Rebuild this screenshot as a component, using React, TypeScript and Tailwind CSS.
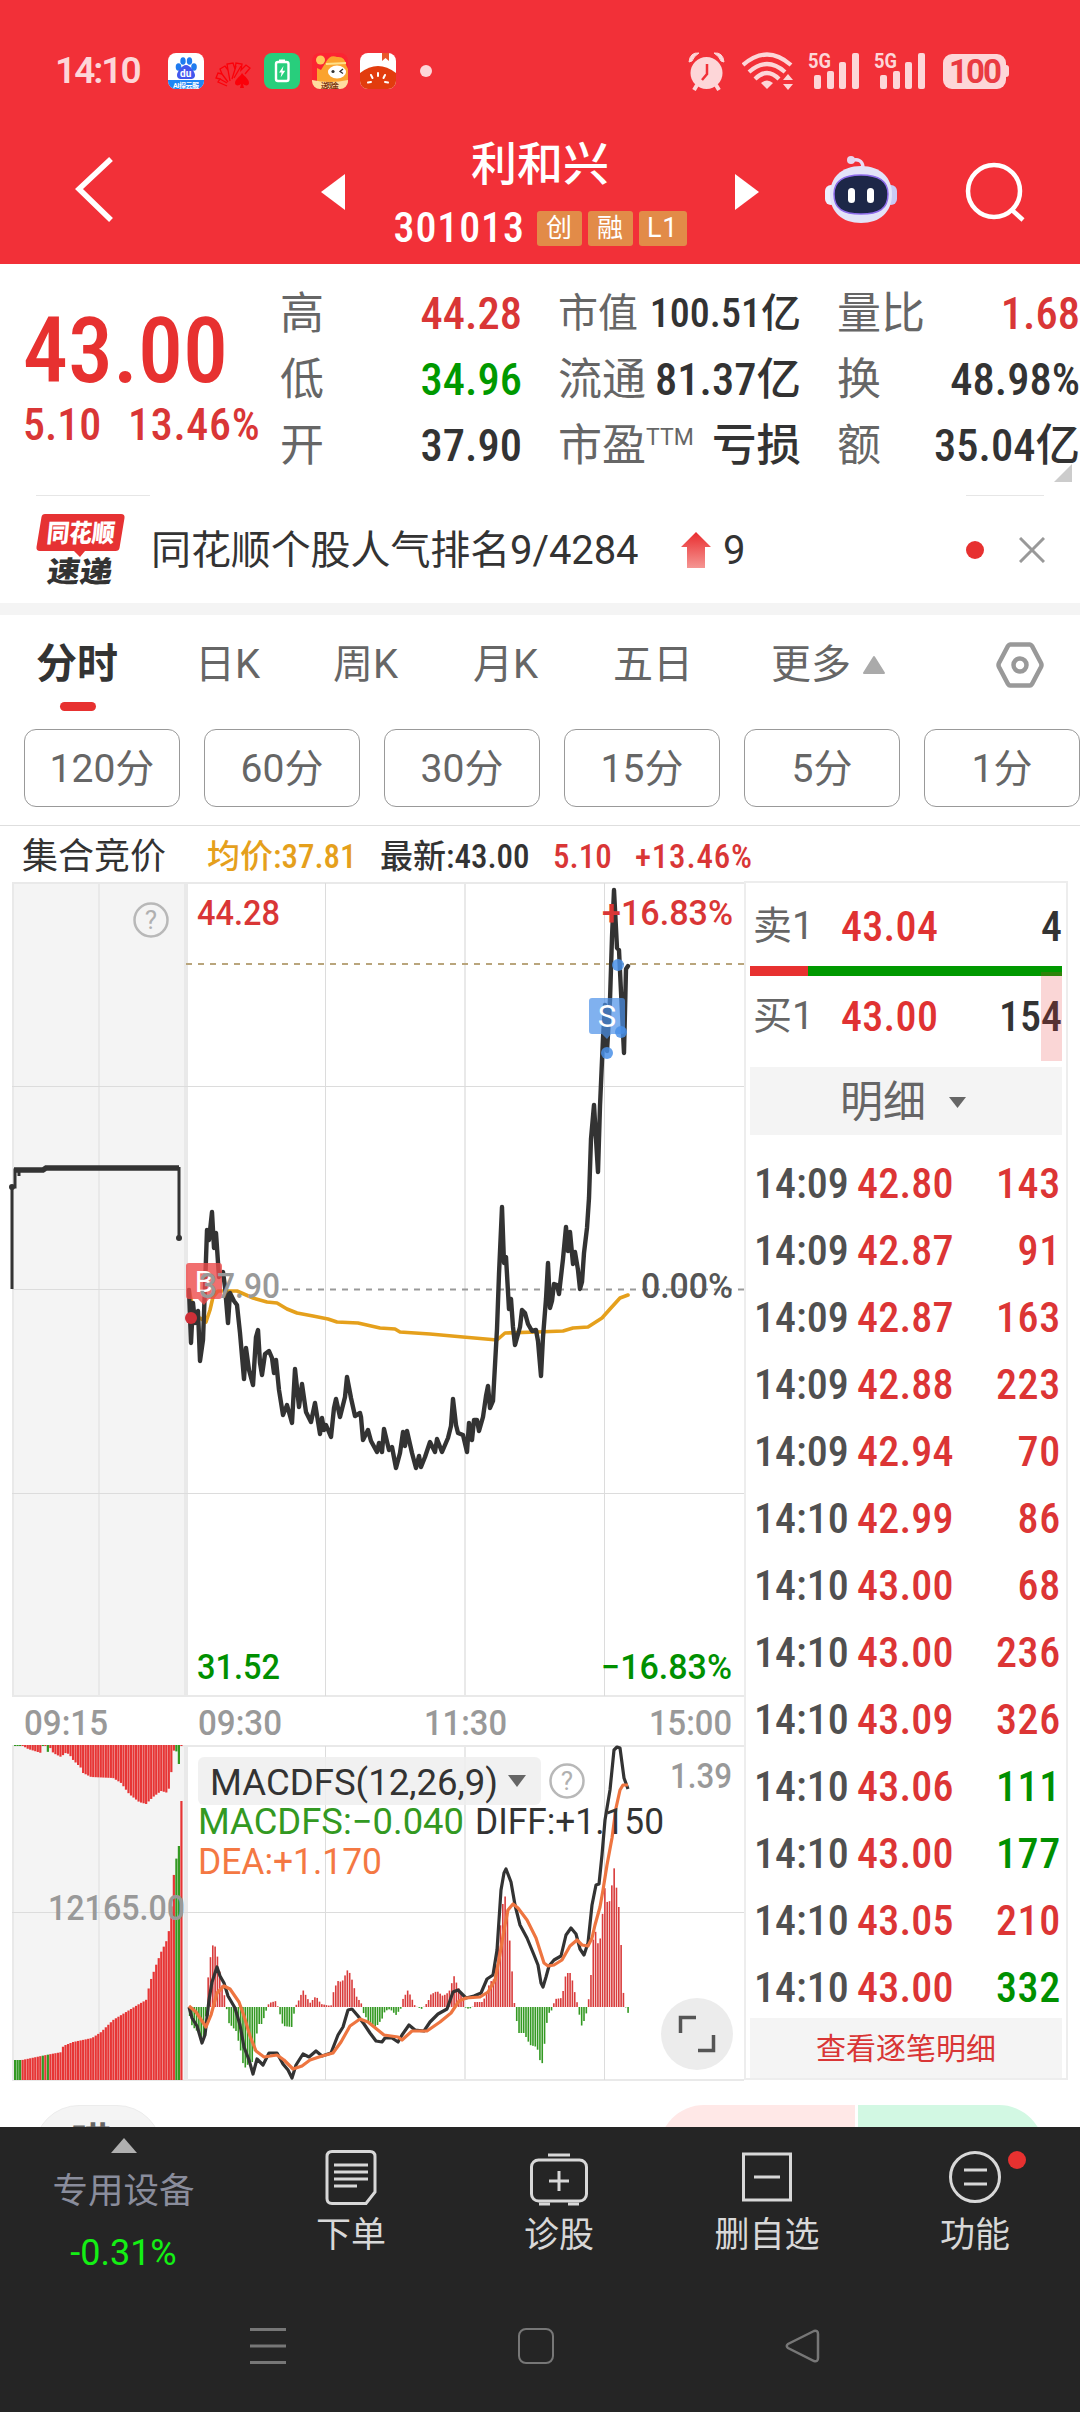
import clsx from "clsx";
import type { ReactNode } from "react";

type Point = [number, number];

const price =
  "189,1290 191,1343 193,1303 195,1323 198,1311 200,1361 203,1340 205,1287 207,1230 209,1240 212,1212 214,1248 216,1233 219,1277 223,1272 225,1287 228,1323 230,1293 234,1301 237,1305 240,1333 244,1379 246,1348 249,1370 253,1385 256,1337 258,1330 260,1363 262,1375 265,1354 269,1351 272,1358 274,1373 276,1360 279,1390 283,1415 287,1405 292,1423 295,1369 299,1407 302,1384 306,1412 311,1422 315,1403 320,1434 322,1418 324,1430 326,1425 331,1437 334,1408 336,1399 340,1417 345,1397 347,1377 351,1398 355,1416 360,1413 361,1417 363,1440 368,1430 371,1441 377,1452 379,1443 382,1452 384,1429 389,1450 392,1447 396,1468 400,1453 403,1432 405,1446 407,1431 412,1453 416,1468 419,1456 421,1467 425,1457 430,1442 435,1452 437,1439 442,1452 448,1438 451,1426 453,1399 456,1425 458,1433 463,1435 467,1452 469,1423 472,1440 474,1420 477,1420 479,1431 483,1417 486,1396 488,1386 490,1408 493,1401 497,1329 499,1274 502,1207 504,1263 506,1257 509,1309 511,1299 513,1327 515,1345 520,1327 522,1310 525,1313 528,1324 532,1331 536,1330 538,1341 541,1376 543,1337 546,1299 548,1263 550,1308 552,1301 554,1284 557,1285 559,1294 563,1259 566,1227 568,1251 570,1232 573,1264 575,1252 578,1270 580,1289 582,1282 584,1253 587,1228 589,1198 591,1139 594,1105 596,1139 598,1172 600,1106 603,1038 605,1005 607,1051 610,1000 612,937 614,890 617,948 619,950 621,992 624,1053 626,969 628,966";

const average =
  "189,1290 195,1318 200,1318 206,1322 210,1310 213,1297 218,1291 237,1291 253,1298 267,1302 277,1303 287,1309 297,1313 313,1316 328,1319 337,1322 358,1323 380,1328 395,1329 400,1332 430,1334 463,1337 497,1340 505,1333 537,1332 563,1331 573,1328 588,1327 602,1318 610,1309 620,1298 628,1295";

const diff =
  "189,2007 192,2018 197,2026 202,2043 205,2035 209,2000 212,1982 217,1967 220,1976 224,1983 228,1996 235,2008 240,2025 244,2047 249,2060 253,2074 257,2059 263,2065 269,2053 277,2053 283,2064 288,2070 292,2078 296,2065 303,2054 309,2057 316,2051 322,2056 331,2053 338,2035 343,2027 348,2010 352,2009 358,2016 364,2024 370,2033 376,2041 382,2042 385,2038 392,2038 398,2042 402,2035 409,2025 415,2030 424,2031 430,2022 438,2014 447,2009 453,1992 458,1990 466,1998 474,1996 481,1993 487,1979 493,1975 497,1950 501,1890 504,1873 506,1869 511,1882 515,1905 520,1925 527,1938 534,1955 538,1965 541,1983 543,1987 546,1977 549,1966 554,1960 561,1956 566,1935 571,1928 576,1934 580,1949 584,1955 588,1943 592,1905 596,1885 599,1884 602,1855 605,1820 610,1790 614,1750 617,1747 620,1748 624,1778 628,1789";

const dea =
  "189,2006 196,2012 206,2027 211,2015 217,1993 224,1986 230,1989 239,2002 244,2016 250,2036 256,2051 264,2057 277,2055 284,2060 293,2069 302,2066 310,2060 322,2056 333,2053 341,2042 350,2026 360,2019 368,2022 384,2035 398,2037 402,2040 412,2031 427,2031 440,2022 451,2013 459,2001 466,1998 480,1997 488,1992 495,1980 499,1960 504,1930 508,1910 513,1904 518,1908 527,1920 536,1938 544,1963 548,1966 554,1965 562,1960 570,1946 577,1940 582,1945 588,1946 592,1938 595,1925 600,1907 603,1890 607,1865 612,1838 616,1808 620,1790 623,1785 628,1785";

const macd: Point[] = [
  [189, 0], [190, -15], [193, -20], [198, -25], [203, -35], [206, -8], [207, 18], [209, 38], [212, 62],
  [216, 60], [219, 40], [222, 22], [226, 5], [228, -15], [236, -24], [241, -45], [244, -62], [250, -55],
  [253, -55], [256, -34], [258, -17], [262, -17], [267, -1], [269, 4], [276, 6], [279, -3], [283, -19],
  [292, -20], [295, 0], [298, 5], [303, 17], [310, 4], [316, 11], [321, 3], [331, 1], [334, 18], [338, 26],
  [342, 25], [348, 38], [351, 31], [357, 9], [361, 5], [363, -5], [368, -14], [376, -20], [382, -12],
  [385, -4], [390, -2], [396, -8], [399, -4], [402, 0], [403, 8], [408, 17], [412, 8], [415, 1], [422, -2],
  [428, 5], [430, 12], [437, 16], [443, 11], [449, 15], [454, 31], [458, 20], [463, 11], [466, -2],
  [472, -1], [475, 5], [483, 5], [487, 16], [490, 25], [494, 28], [498, 60], [502, 95], [504, 115],
  [507, 103], [511, 50], [514, 10], [515, -5], [519, -26], [524, -26], [530, -38], [537, -40], [541, -58],
  [543, -55], [546, -20], [549, -6], [552, -3], [555, 8], [562, 9], [566, 34], [571, 34], [574, 18],
  [577, 5], [579, -6], [582, -20], [586, -8], [588, 2], [590, 20], [592, 45], [594, 80], [596, 74],
  [599, 58], [601, 75], [604, 110], [605, 120], [607, 105], [610, 106], [614, 140], [617, 115], [620, 90],
  [622, 40], [624, 4], [626, -1], [629, -8],
];

const unmatched: Point[] = [
  [13, 1], [22, 1], [27, 4], [40, 8], [41, 1], [45, 1], [46, 8], [50, 2], [52, 8], [60, 12], [64, 8], [68, 9],
  [72, 15], [80, 23], [82, 28], [90, 32], [112, 33], [120, 38], [128, 49], [138, 57], [145, 59], [152, 52],
  [160, 46], [167, 48], [170, 30], [172, 6], [174, 5], [175, 5], [178, 20], [180, 1], [182, 1],
];

const matched: Point[] = [
  [13, 20], [21, 20], [40, 24], [50, 26], [61, 28], [62, 34], [72, 38], [91, 42], [100, 48], [112, 60],
  [125, 68], [138, 76], [145, 80], [149, 98], [155, 115], [160, 128], [165, 138], [168, 150], [170, 170],
  [172, 200], [175, 220], [178, 235], [180, 279], [182, 279],
];

function valueAt(points: Point[], x: number) {
  const i = points.findIndex((p) => p[0] >= x);
  if (i <= 0) return points[0][1];
  const [x0, y0] = points[i - 1];
  const [x1, y1] = points[i];
  return y0 + ((y1 - y0) * (x - x0)) / (x1 - x0);
}

const trades: [string, string, string, boolean][] = [
  ["14:09", "42.80", "143", true],
  ["14:09", "42.87", "91", true],
  ["14:09", "42.87", "163", true],
  ["14:09", "42.88", "223", true],
  ["14:09", "42.94", "70", true],
  ["14:10", "42.99", "86", true],
  ["14:10", "43.00", "68", true],
  ["14:10", "43.00", "236", true],
  ["14:10", "43.09", "326", true],
  ["14:10", "43.06", "111", false],
  ["14:10", "43.00", "177", false],
  ["14:10", "43.05", "210", true],
  ["14:10", "43.00", "332", false],
];

function Num({ children, className }: { children: ReactNode; className?: string }) {
  return (
    <span className={clsx("font-medium whitespace-nowrap [font-stretch:87%]", className)}>
      {children}
    </span>
  );
}

function Signal() {
  return (
    <svg width="52" height="38" viewBox="0 0 52 38" fill="#fdd6d8" className="overflow-visible">
      <text x="0" y="16" fontSize="21" fontWeight="700" textLength="23" lengthAdjust="spacingAndGlyphs">
        5G
      </text>
      <rect x="6" y="23" width="7" height="14" rx="2" />
      <rect x="19" y="19" width="7" height="18" rx="2" />
      <rect x="31" y="10" width="7" height="27" rx="2" />
      <rect x="44" y="1" width="7" height="36" rx="2" />
    </svg>
  );
}

function AppIcons() {
  return (
    <svg width="266" height="36" viewBox="0 0 266 36" className="ml-[26px]">
      <rect width="36" height="36" rx="8" fill="#fff" />
      <g fill="#1f7bef">
        <ellipse cx="10.500" cy="14" rx="2.800" ry="3.700" />
        <ellipse cx="15" cy="8" rx="2.700" ry="3.800" />
        <ellipse cx="21.500" cy="8" rx="2.700" ry="3.800" />
        <ellipse cx="26" cy="14" rx="2.800" ry="3.700" />
      </g>
      <path d="M18 12c4 0 9 7 9 10 0 5-5 4-9 4s-9 1-9-4c0-3 5-10 9-10Z" fill="#4257ee" />
      <text x="12" y="24" fontSize="10" fontWeight="700" fill="#fff">du</text>
      <path d="M0 27h36v1a8 8 0 0 1-8 8H8a8 8 0 0 1-8-8Z" fill="#1f86f5" />
      <text x="5" y="34.500" fontSize="7" fontWeight="700" fill="#fff" textLength="26">AI探云服</text>

      <g stroke="#fb0009" strokeWidth="1.300" fill="none">
        <path d="M59 33l-9-4 2-3-4-1 2-5 4 1-2-5 5-3 3 4-1-6 6-1 2 6 1-6 6 1-1 6 5-5 4 3-5 6" />
        <path d="M54 21l6 8M60 17l2 11M68 13l-4 13M73 13l-7 12M52 26l7 4" />
      </g>
      <path d="M74 20c3 4 7 6 7 10 0 3-4 3-6 1l1 4h-4l1-4c-2 2-6 2-6-1 0-4 5-6 7-10Z" fill="#fb0009" />

      <rect x="96" width="36" height="36" rx="8" fill="#28ce7c" />
      <rect x="108" y="9" width="12.500" height="19" rx="2" fill="none" stroke="#fff" strokeWidth="2.400" />
      <rect x="111" y="6.500" width="6" height="3" fill="#fff" />
      <path d="M115.500 13l-4.500 6.500h2.600l-1 5 4.600-6.700h-2.700Z" fill="#fff" />

      <rect x="144" width="36" height="36" rx="8" fill="#fb2432" />
      <path d="M149 15l4 2 5-8q4-8 11-5 8-1 9 8l2 4v14h-31Z" fill="#fba32e" />
      <path d="M158 11l20-1" stroke="#ffe08a" strokeWidth="2" />
      <circle cx="152.500" cy="7" r="4.500" fill="#ffc85c" />
      <ellipse cx="169" cy="19" rx="9" ry="6.500" fill="#fff" />
      <circle cx="165" cy="18.500" r="1.600" fill="#333" />
      <path d="M175 16l-3 2.500 3 2" stroke="#333" strokeWidth="1.300" fill="none" />
      <path d="M144 27q18 4 36 0v1a8 8 0 0 1-8 8h-20a8 8 0 0 1-8-8Z" fill="#ffdca0" />
      <text x="153" y="34.500" fontSize="7" fontWeight="700" fill="#7a3510" textLength="18">送现金</text>

      <rect x="192" width="36" height="36" rx="8" fill="#fff" />
      <path d="M214 0h7v8l-3.500-3L214 8Z" fill="#e9572b" />
      <path d="M192 20q18-14 36 0v8a8 8 0 0 1-8 8h-20a8 8 0 0 1-8-8Z" fill="#e23c0e" />
      <g stroke="#fff" strokeWidth="2" strokeLinecap="round">
        <path d="M210 20v3M203 22l1.500 3M217 22l-1.500 3M200 29.500l3-.500M220 29.500l-3-.500" />
      </g>
      <circle cx="258" cy="18" r="6" fill="#fdd6d8" />
    </svg>
  );
}

function StatusBar() {
  return (
    <div className="flex h-[142px] items-center pl-[55px] pr-[71px]">
      <span className="w-[87px] pb-[2px] text-[37px] font-semibold leading-none tracking-[-2px] text-[#fdd6d8] whitespace-nowrap">
        14:10
      </span>
      <AppIcons />
      <div className="ml-auto flex items-center">
        <svg width="37" height="39" viewBox="0 0 37 39" fill="#fdd6d8">
          <circle cx="18.500" cy="21" r="16" />
          <path d="M1 10Q2 0 11 1Q6 4 4 9ZM36 10Q35 0 26 1Q31 4 33 9Z" stroke="#fdd6d8" strokeLinejoin="round" />
          <path d="M9 33l-3 5M28 33l3 5" stroke="#fdd6d8" strokeWidth="4" />
          <path d="M19 12v10l-5 6" stroke="#f13038" strokeWidth="2.500" fill="none" />
        </svg>
        <svg width="52" height="38" viewBox="0 0 52 38" className="ml-[17px]" fill="none" stroke="#fdd6d8" strokeWidth="4.200">
          <path d="M1 13Q25-8 49 13M7 20Q25 4 43 20M13 27Q25 15 37 27" />
          <path d="M19 31Q25 26 31 31L25 37Z" fill="#fdd6d8" stroke="none" />
          <path d="M46 22l5 6H41ZM46 38l5-6H41Z" fill="#fdd6d8" stroke="none" />
        </svg>
        <div className="ml-[14px] flex gap-[14px]">
          <Signal />
          <Signal />
        </div>
        <div className="ml-[17px] flex h-[35px] w-[63px] items-center justify-center rounded-[9px] bg-[#fdd6d8] text-[33px] font-bold leading-none tracking-[-2px] text-[#ea3b42]">
          100
        </div>
        <div className="h-[12px] w-[3px] rounded-r-sm bg-[#fdd6d8]" />
      </div>
    </div>
  );
}

function Robot() {
  return (
    <svg width="74" height="68" viewBox="0 0 74 68">
      <path d="M26 6q12-4 13 6" stroke="#eadcf6" strokeWidth="3.500" fill="none" />
      <circle cx="27" cy="5" r="4" fill="#e6d6ee" />
      <rect x="1" y="30" width="12" height="20" rx="6" fill="#eef0ff" />
      <rect x="61" y="30" width="12" height="20" rx="6" fill="#c9c9f4" />
      <path d="M37 11c20 0 31 12 31 28 0 18-12 29-31 29S6 57 6 39C6 23 17 11 37 11Z" fill="#e3e3f8" />
      <path d="M37 20c18 0 27 6 27 19 0 15-9 20-27 20S10 54 10 39c0-13 9-19 27-19Z" fill="#1d2748" stroke="#8d6bea" strokeWidth="1.500" />
      <rect x="24" y="33" width="7" height="15" rx="3.500" fill="#fff" />
      <rect x="43" y="33" width="7" height="15" rx="3.500" fill="#fff" />
    </svg>
  );
}

function Header() {
  return (
    <div className="flex h-[122px] pl-[75px]">
      <svg width="40" height="70" viewBox="0 0 40 70" className="mt-[12px]">
        <path d="M36 5L4 35l32 31" fill="none" stroke="#fff" strokeWidth="5.500" />
      </svg>
      <svg width="24" height="36" className="ml-[206px] mt-[32px]">
        <path d="M24 0v36L0 18Z" fill="#fff" />
      </svg>
      <div className="ml-[10px] flex w-[370px] flex-col items-center text-white">
        <div className="h-[60px] text-[46px] font-medium leading-[44px]">利和兴</div>
        <div className="mt-[8px] flex items-center gap-[6px]">
          <Num className="mr-[6px] w-[131px] text-[42px] leading-[36px] tracking-[0.9px]">301013</Num>
          <span className="flex h-[35px] w-[45px] items-center justify-center rounded-[3px] bg-[#e28b48] text-[26px]">创</span>
          <span className="flex h-[35px] w-[45px] items-center justify-center rounded-[3px] bg-[#e28b48] text-[26px]">融</span>
          <span className="flex h-[35px] w-[48px] items-center justify-center rounded-[3px] bg-[#e28b48] text-[27px] tracking-wide">L1</span>
        </div>
      </div>
      <svg width="24" height="36" className="ml-[10px] mt-[32px]">
        <path d="M0 0v36l24-18Z" fill="#fff" />
      </svg>
      <div className="ml-[65px] mt-[13px]">
        <Robot />
      </div>
      <svg width="62" height="62" viewBox="0 0 62 62" className="ml-[67px] mt-[18px]" fill="none" stroke="#fff" strokeWidth="4.500">
        <circle cx="29" cy="31" r="26" />
        <path d="M47 50l11 10" />
      </svg>
    </div>
  );
}

function Cell({ label, value, color, small }: { label: ReactNode; value: string; color?: string; small?: boolean }) {
  return (
    <div className="flex h-[66px] items-center justify-between leading-none">
      <span className={clsx("whitespace-nowrap text-[#666]", small ? "text-[40px]" : "text-[44px]")}>{label}</span>
      <Num className={clsx(color ?? "text-[#333]", small ? "text-[40px]" : "text-[44.5px]")}>{value}</Num>
    </div>
  );
}

function Quote() {
  return (
    <div className="relative flex h-[231px] pt-[17px]">
      <div className="w-[280px] pl-[23px] text-[#e73130]">
        <Num className="mt-[22px] block text-[90px] leading-[98px]">43.00</Num>
        <div className="flex leading-[48px] text-[#d93636]">
          <Num className="w-[105px] text-[44px]">5.10</Num>
          <Num className="text-[44px] tracking-[0.7px]">13.46%</Num>
        </div>
      </div>
      <div className="w-[242px]">
        <Cell label="高" value="44.28" color="text-[#d93636]" />
        <Cell label="低" value="34.96" color="text-[#009900]" />
        <Cell label="开" value="37.90" />
      </div>
      <div className="ml-[36px] w-[243px]">
        <Cell label="市值" value="100.51亿" small />
        <Cell label="流通" value="81.37亿" />
        <Cell
          label={
            <>
              市盈<sup className="-top-[16px] text-[23px]">TTM</sup>
            </>
          }
          value="亏损"
        />
      </div>
      <div className="ml-[36px] w-[243px]">
        <Cell label="量比" value="1.68" color="text-[#d93636]" />
        <Cell label="换" value="48.98%" />
        <Cell label="额" value="35.04亿" />
      </div>
      <svg width="18" height="18" className="absolute right-[8px] top-[200px]">
        <path d="M18 0v18H0Z" fill="#ccc" />
      </svg>
    </div>
  );
}

function News() {
  return (
    <div className="h-[108px]">
      <div className="flex h-px justify-between pl-[36px] pr-[36px]">
        <div className="w-[114px] bg-[#e6e6e6]" />
        <div className="w-[78px] bg-[#e6e6e6]" />
      </div>
      <div className="flex h-[107px] items-center pl-[36px] pr-[35px] text-[40px] text-[#333]">
        <svg width="90" height="74" viewBox="0 0 90 74" className="overflow-visible">
          <path d="M9 1h76q4 0 3.500 4l-5 30q-.500 3-4 3H49l-5 6-6-6H4q-4 0-3.500-4l5-30Q6 1 9 1Z" fill="#e63233" />
          <text x="13" y="29" fontSize="25" fontWeight="900" fill="#fff" textLength="68" lengthAdjust="spacingAndGlyphs" transform="skewX(-6)">同花顺</text>
          <text x="20" y="69" fontSize="29" fontWeight="900" fill="#333" textLength="65" lengthAdjust="spacingAndGlyphs" transform="skewX(-8)">速递</text>
        </svg>
        <span className="ml-[25px] w-[530px] whitespace-nowrap pt-[3px] tracking-[-0.1px]">同花顺个股人气排名9/4284</span>
        <svg width="30" height="36" viewBox="0 0 30 36">
          <defs>
            <linearGradient id="rise" x1="0" y1="0" x2="0" y2="1">
              <stop offset="0" stopColor="#e92c2e" />
              <stop offset="1" stopColor="#f59693" />
            </linearGradient>
          </defs>
          <path d="M15 0l15 15h-6v21H6V15H0Z" fill="url(#rise)" />
        </svg>
        <span className="ml-[12px] pt-[3px]">9</span>
        <div className="ml-auto size-[18px] rounded-full bg-[#e73130]" />
        <svg width="26" height="26" className="ml-[35px]" stroke="#999" strokeWidth="3">
          <path d="M1 1l24 24M25 1L1 25" />
        </svg>
      </div>
    </div>
  );
}

function Tabs() {
  return (
    <div className="h-[114px]">
      <div className="flex h-[98px] items-center pr-[35px] pt-[2px] text-[40px] text-[#666]">
        <span className="w-[195px] pl-[36px] text-[41px] font-bold text-[#333]">分时</span>
        <span className="w-[138px]">日K</span>
        <span className="w-[140px]">周K</span>
        <span className="w-[140px]">月K</span>
        <span className="w-[158px]">五日</span>
        <span>更多</span>
        <svg width="24" height="20" className="ml-[11px]">
          <path d="M12 2L22 18H2Z" fill="#aaa" stroke="#aaa" strokeWidth="2" strokeLinejoin="round" />
        </svg>
        <svg width="50" height="48" viewBox="0 0 50 48" className="ml-auto" fill="none" stroke="#999" strokeWidth="4.500">
          <path d="M15 3.500h20q1 0 2 1.500l9 17q1 2 0 4l-9 17q-1 1.500-2 1.500H15q-1 0-2-1.500L4 26q-1-2 0-4l9-17q1-1.500 2-1.500Z" />
          <circle cx="25" cy="24" r="6.500" />
        </svg>
      </div>
      <div className="ml-[60px] -mt-[11px] h-[9px] w-[36px] rounded-full bg-[#e73130]" />
    </div>
  );
}

function Periods() {
  return (
    <div className="flex h-[97px] gap-[24px] border-b border-[#dedede] pl-[24px]">
      {["120分", "60分", "30分", "15分", "5分", "1分"].map((period) => (
        <div
          key={period}
          className="flex h-[78px] w-[156px] shrink-0 items-center justify-center rounded-[12px] border border-[#999] pt-[3px] text-[39px] text-[#666]"
        >
          {period}
        </div>
      ))}
    </div>
  );
}

function Label({ x, y, w, size = 35, weight = 500, fill = "#999", children }: { x: number; y: number; w: number; size?: number; weight?: number; fill?: string; children: string }) {
  return (
    <text x={x} y={y} textLength={w} lengthAdjust="spacingAndGlyphs" fontSize={size} fontWeight={weight} fill={fill}>
      {children}
    </text>
  );
}

function Help({ cx, cy }: { cx: number; cy: number }) {
  return (
    <g>
      <circle cx={cx} cy={cy} r="16.500" fill="none" stroke="#b8b8b8" strokeWidth="2.500" />
      <text x={cx} y={cy + 9} textAnchor="middle" fontSize="26" fill="#b0b0b0">?</text>
    </g>
  );
}

function Chart() {
  const minutes = Array.from({ length: 190 }, (_, i) => 189.6 + i * 2.32);
  const auction = Array.from({ length: 67 }, (_, i) => 14 + i * 2.52);

  return (
    <svg width="744" height="1200" viewBox="0 881 744 1200" className="shrink-0">
      <rect x="12" y="883" width="174" height="813" fill="#f4f4f4" />
      <rect x="12" y="1746" width="174" height="334" fill="#f4f4f4" />
      <g stroke="#e9e9e9" strokeWidth="2">
        <path d="M12 883H745M12 1696H745M12 1746H745M12 2080H745" />
        <path d="M13 883V1696M99 883V1696M13 1746V2080M99 1746V2080" />
        <path d="M465 883V1696M465 1746V2080" />
      </g>
      <path d="M186 883V1696M186 1746V2080" stroke="#e9e9e9" strokeWidth="4" />
      <g stroke="#dcdcdc">
        <path d="M12 1086.500H745M12 1289.500H186M12 1493.500H745M12 1912.500H745" />
        <path d="M325.500 883V1696M325.500 1746V2080M604.500 883V1696M604.500 1746V2080" />
      </g>
      <path d="M186 964H745" stroke="#b9a57c" strokeWidth="2" strokeDasharray="6 6" />
      <path d="M282 1289.500H745" stroke="#999" strokeWidth="2" strokeDasharray="6 6" />

      {/* call auction */}
      <g fill="none" stroke="#333" strokeWidth="4">
        <path d="M12 1289V1187H15V1170H19V1176" strokeWidth="3" />
        <path d="M14 1170H43L46 1168H179" strokeWidth="5.500" />
        <path d="M179 1167V1237" strokeWidth="3" />
      </g>
      <circle cx="12" cy="1187" r="3" fill="#333" />
      <circle cx="179" cy="1238" r="3" fill="#333" />
      {auction.map((x, i) => {
        const bottom = valueAt(matched, x);
        const top = valueAt(unmatched, x);
        const green = i < 3 || i === 11 || i === 13 || i === 64 || i === 65;
        return (
          <g key={x} fill={green ? "#339922" : "#e73535"}>
            <rect x={x} y={1745} width="2.200" height={top} />
            <rect x={x} y={2080 - bottom} width="2.200" height={bottom} />
          </g>
        );
      })}

      <g fill="none" strokeLinejoin="round" strokeLinecap="round">
        <polyline points={average} stroke="#e5a01c" strokeWidth="3.600" />
        <polyline points={price} stroke="#333" strokeWidth="4.400" />
      </g>
      <circle cx="191" cy="1318" r="6" fill="#cf3038" />
      <path d="M189 1263h30q3 0 3 3v30q0 3-3 3h-10l-5 6-6-6h-9q-3 0-3-3v-30q0-3 3-3Z" fill="#ed4b4b" fillOpacity=".8" />
      <text x="204" y="1292" textAnchor="middle" fontSize="30" fill="#fff">B</text>
      <g fill="#4a90e8" fillOpacity=".85">
        <path d="M592 998h30q3 0 3 3v30q0 3-3 3h-11l-4 5-5-5h-10q-3 0-3-3v-30q0-3 3-3Z" fillOpacity=".7" />
        <circle cx="618" cy="965" r="6" />
        <circle cx="621" cy="1032" r="6" />
        <circle cx="607" cy="1053" r="6" />
      </g>
      <text x="607" y="1027" textAnchor="middle" fontSize="31" fill="#fff">S</text>

      <Help cx={151} cy={920} />
      <Label x={197} y={925} w={83} fill="#d93636">44.28</Label>
      <Label x={602} y={925} w={131} fill="#d93636">+16.83%</Label>
      <Label x={199} y={1298} w={81}>37.90</Label>
      <Label x={641} y={1298} w={92} fill="#555">0.00%</Label>
      <Label x={197} y={1679} w={83} fill="#009000">31.52</Label>
      <Label x={601} y={1679} w={131} fill="#009000">−16.83%</Label>
      <Label x={24} y={1735} w={84}>09:15</Label>
      <Label x={198} y={1735} w={84}>09:30</Label>
      <Label x={424} y={1735} w={83}>11:30</Label>
      <Label x={649} y={1735} w={83}>15:00</Label>

      <g>
        {minutes.map((x) => {
          const h = valueAt(macd, x);
          return (
            <rect key={x} x={x - 0.8} y={h > 0 ? 2007 - h : 2007} width="1.600" height={Math.abs(h)} fill={h > 0 ? "#d93c3c" : "#339922"} />
          );
        })}
      </g>
      <rect x="198" y="1757" width="343" height="48" rx="6" fill="#efefef" fillOpacity=".85" />
      <g fill="none" strokeLinejoin="round" strokeWidth="3.200">
        <polyline points={diff} stroke="#333" />
        <polyline points={dea} stroke="#ee7540" />
      </g>
      <Label x={210} y={1795} w={288} size={36} weight={400} fill="#333">MACDFS(12,26,9)</Label>
      <path d="M508 1775h18l-9 12Z" fill="#666" />
      <Help cx={567} cy={1781} />
      <Label x={670} y={1788} w={62}>1.39</Label>
      <Label x={198} y={1834} w={266} size={36} weight={450} fill="#339922">MACDFS:−0.040</Label>
      <Label x={475} y={1834} w={189} size={36} weight={450} fill="#333">DIFF:+1.150</Label>
      <Label x={198} y={1874} w={184} size={36} weight={450} fill="#f47843">DEA:+1.170</Label>
      <Label x={48} y={1920} w={137}>12165.00</Label>

      <circle cx="697" cy="2034" r="36" fill="#ececec" />
      <path d="M680.500 2033v-15.500H696M698 2050.500h15.500V2035" fill="none" stroke="#555" strokeWidth="3.500" />
    </svg>
  );
}

function OrderBook() {
  return (
    <div className="relative h-[1199px] w-[324px] border-2 border-[#ededed] pl-[4px] pr-[4px]">
      <div className="flex h-[83px] items-center pt-[3px]">
        <span className="w-[91px] pl-[3px] text-[39px] text-[#666]">卖1</span>
        <Num className="text-[42px] tracking-[0.3px] text-[#e03232]">43.04</Num>
        <Num className="ml-auto text-[42px] text-[#333]">4</Num>
      </div>
      <div className="flex h-[10px]">
        <div className="w-[58px] bg-[#e73130]" />
        <div className="flex-1 bg-[#009900]" />
      </div>
      <div className="flex h-[91px] items-center pb-[11px]">
        <span className="w-[91px] pl-[3px] text-[39px] text-[#666]">买1</span>
        <Num className="text-[42px] tracking-[0.3px] text-[#e03232]">43.00</Num>
        <Num className="ml-auto text-[42px] text-[#333]">154</Num>
      </div>
      <div className="absolute right-[4px] top-[89px] h-[89px] w-[21px] bg-[#e73130]/20" />
      <div className="flex h-[68px] items-center bg-[#f4f4f4] pl-[90px] pt-[2px] text-[43px] text-[#666]">
        明细
        <svg width="17" height="11" className="ml-[23px]">
          <path d="M0 0h17l-8.500 11Z" fill="#666" />
        </svg>
      </div>
      <div className="mt-[15px]">
        {trades.map(([time, value, volume, up], i) => (
          <div key={i} className="flex h-[67px] items-center text-[42px]">
            <Num className="w-[107px] pl-[4px] text-[#505050]">{time}</Num>
            <Num className="tracking-[0.2px] text-[#dc3535]">{value}</Num>
            <Num className={clsx("ml-auto pr-[1px] tracking-[0.7px]", up ? "text-[#dc3535]" : "text-[#009000]")}>{volume}</Num>
          </div>
        ))}
      </div>
      <div className="-mt-[3px] flex h-[60px] items-center justify-center bg-[#f4f4f4] text-[30px] text-[#d93636]">
        查看逐笔明细
      </div>
    </div>
  );
}

function TabItem({ label, children }: { label: string; children: ReactNode }) {
  return (
    <div className="flex w-[208px] shrink-0 flex-col items-center">
      <svg width="64" height="60" viewBox="0 0 64 60" fill="none" stroke="#d8d8d8" strokeWidth="3">
        {children}
      </svg>
      <span className="mt-[8px] text-[35px] leading-[42px] text-[#d8d8d8]">{label}</span>
    </div>
  );
}

function BottomBar() {
  return (
    <div className="h-[285px] bg-[#252525]">
      <div className="flex h-[168px] pt-[20px]">
        <div className="-mt-[9px] flex w-[247px] shrink-0 flex-col items-center text-[35.5px] leading-none text-[#8a8d9c]">
          <svg width="26" height="15">
            <path d="M13 0l13 15H0Z" fill="#b0b0b0" />
          </svg>
          <span className="mt-[21px]">专用设备</span>
          <span className="mt-[25px] text-[36px] text-[#14f014]">-0.31%</span>
        </div>
        <TabItem label="下单">
          <path d="M13 4.500h38q5 0 5 5V45L47 56.500H13q-5 0-5-5V9.500q0-5 5-5Z" />
          <path d="M15 18h34M15 25h34M15 32h34M15 39h23" />
        </TabItem>
        <TabItem label="诊股">
          <rect x="4.500" y="13" width="55" height="41" rx="7" />
          <path d="M21 8h22M32 24v20M22 34h20M12 57h11M41 57h11" />
        </TabItem>
        <TabItem label="删自选">
          <rect x="8.500" y="7" width="47" height="46" />
          <path d="M19 30h26" />
        </TabItem>
        <TabItem label="功能">
          <circle cx="32" cy="30" r="24.500" />
          <path d="M21 23h23M21 37h23" />
        </TabItem>
        <div className="-ml-[71px] mt-[4px] size-[18px] shrink-0 rounded-full bg-[#e73130]" />
      </div>
      <div className="flex items-center pl-[250px] pt-[33px]">
        <svg width="36" height="36" stroke="#777" strokeWidth="3">
          <path d="M0 1.500h36M0 18h36M0 34.500h36" />
        </svg>
        <div className="ml-[232px] size-[36px] rounded-[8px] border-[2.5px] border-[#777]" />
        <svg width="36" height="36" className="ml-[230px]" fill="none" stroke="#777" strokeWidth="2.500">
          <path d="M30 3L4 16q-2.500 2 0 4l26 13q4 1 4-3V6q0-4-4-3Z" />
        </svg>
      </div>
    </div>
  );
}

export default function App() {
  return (
    <div className="flex h-[2412px] w-[1080px] flex-col overflow-hidden bg-white font-[Roboto,'Noto_Sans_CJK_SC',sans-serif]">
      <div className="h-[264px] shrink-0 bg-[#f23038]">
        <StatusBar />
        <Header />
      </div>
      <Quote />
      <News />
      <div className="h-[12px] bg-[#f4f4f4]" />
      <Tabs />
      <Periods />
      <div className="flex h-[55px] items-center pl-[22px] pt-[6px] text-[33px] text-[#333]">
        <span className="w-[185px] text-[36px]">集合竞价</span>
        <Num className="w-[173px] text-[#e5a01c]">均价:37.81</Num>
        <Num className="w-[173px]">最新:43.00</Num>
        <Num className="w-[82px] text-[#d93636]">5.10</Num>
        <Num className="tracking-[0.8px] text-[#d93636]">+13.46%</Num>
      </div>
      <div className="flex h-[1200px] shrink-0">
        <Chart />
        <OrderBook />
      </div>
      <div className="flex h-[46px] shrink-0 justify-between overflow-hidden pl-[34px] pr-[36px] pt-[24px]">
        <div className="h-[100px] w-[128px] shrink-0 rounded-[45px] border border-[#ececec] bg-[#f4f4f4] pl-[36px] pt-[15px] text-[40px] font-bold leading-[44px] text-[#666]">
          喵
        </div>
        <div className="flex gap-[3px]">
          <div className="h-[100px] w-[196px] rounded-l-[45px] bg-[#ffe8e7]" />
          <div className="h-[100px] w-[186px] rounded-r-[45px] bg-[#d2f8e3]" />
        </div>
      </div>
      <BottomBar />
    </div>
  );
}
